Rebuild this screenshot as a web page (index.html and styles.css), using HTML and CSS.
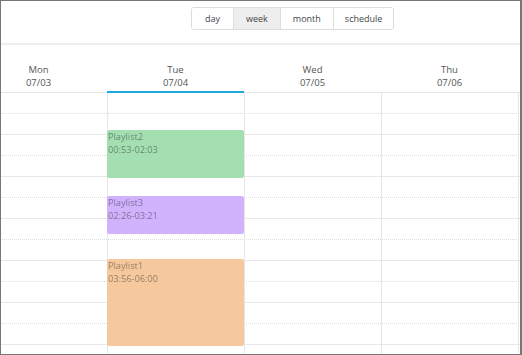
FILE: index.html
```html
<!DOCTYPE html>
<html>

<head>
  <title>Schedule - week</title>
  <link rel="stylesheet" href="styles.css">
</head>

<body>
  <div class="frame">
    <div class="toolbar">
      <div class="views">
        <button type="button">day</button>
        <button type="button" class="active">week</button>
        <button type="button">month</button>
        <button type="button">schedule</button>
      </div>
    </div>
    <div class="viewport">
      <div class="week">
        <div class="head">
          <div class="day"><span>Mon</span><span>07/03</span></div>
          <div class="day today"><span>Tue</span><span>07/04</span></div>
          <div class="day"><span>Wed</span><span>07/05</span></div>
          <div class="day"><span>Thu</span><span>07/06</span></div>
          <div class="day"></div>
        </div>
        <div class="grid">
          <div class="slots">
            <div class="slot"></div><div class="slot"></div>
            <div class="slot"></div><div class="slot"></div>
            <div class="slot"></div><div class="slot"></div>
            <div class="slot"></div><div class="slot"></div>
            <div class="slot"></div><div class="slot"></div>
            <div class="slot"></div><div class="slot"></div>
            <div class="slot"></div><div class="slot"></div>
          </div>
          <div class="cols">
            <div class="col"></div>
            <div class="col">
              <!-- top/height = minutes * 0.7px (42px per hour) -->
              <div class="event green" style="top: 37px; height: 48px;">Playlist2<br>00:53-02:03</div>
              <div class="event purple" style="top: 103px; height: 38px;">Playlist3<br>02:26-03:21</div>
              <div class="event orange" style="top: 166px; height: 87px;">Playlist1<br>03:56-06:00</div>
            </div>
            <div class="col"></div>
            <div class="col"></div>
            <div class="col"></div>
          </div>
        </div>
      </div>
    </div>
  </div>
</body>

</html>
```

FILE: styles.css
```css
*, *::before, *::after {
  box-sizing: border-box;
}
body {
  margin: 0;
  background: white;
  color: #555;
  font-size: 9.5px;
  font-family: 'Open Sans', sans-serif;
}
.frame {
  height: 355px;
  border: 1px solid #777;
  border-right-width: 2px;
  overflow: hidden;
}

.toolbar {
  height: 44px;
  padding: 6px 0 0 190px;
  border-bottom: 2px solid #efefef;
}
.views {
  display: inline-flex;
  border: 1px solid #ddd;
  border-radius: 3px;
  overflow: hidden;
}
.views button {
  font: inherit;
  font-size: 9px;
  color: #444;
  background: white;
  border: none;
  border-left: 1px solid #ddd;
  height: 21px;
  padding: 0 12px;
  line-height: 21px;
}
.views button:first-child {
  border-left: none;
  padding: 0 13px;
}
.views button:last-child {
  padding: 0 11px;
}
.views button.active {
  background: #eee;
}

.viewport {
  overflow: hidden;
}
.week {
  margin-left: -31px;
  width: 685px;
}

.head {
  display: grid;
  grid-template-columns: repeat(5, 137px);
  height: 48px;
}
.day {
  display: flex;
  flex-direction: column;
  align-items: center;
  justify-content: flex-end;
  padding-bottom: 3px;
  line-height: 13px;
  border-bottom: 1px solid #e6e6e6;
}
.day.today {
  border-bottom: 2px solid #1ba8dc;
  padding-bottom: 2px;
}

.grid {
  display: grid;
}
.slots, .cols {
  grid-area: 1 / 1;
}
.slot {
  height: 21px;
  border-bottom: 1px dotted #ddd;
}
.slot:nth-child(even) {
  border-bottom: 1px solid #e8e8e8;
}
.cols {
  display: grid;
  grid-template-columns: repeat(5, 137px);
}
.col {
  position: relative;
  border-left: 1px solid #e6e6e6;
}
.col:first-child {
  border-left: none;
}

.event {
  position: absolute;
  left: 0;
  right: 0;
  margin-left: -1px;
  padding: 0 1px;
  border-radius: 2px;
  font-size: 9.2px;
  line-height: 13px;
  color: rgba(0, 0, 0, 0.42);
}
.green {
  background: #a4dfb2;
}
.purple {
  background: #d0b3fc;
}
.orange {
  background: #f6c89e;
}
```
